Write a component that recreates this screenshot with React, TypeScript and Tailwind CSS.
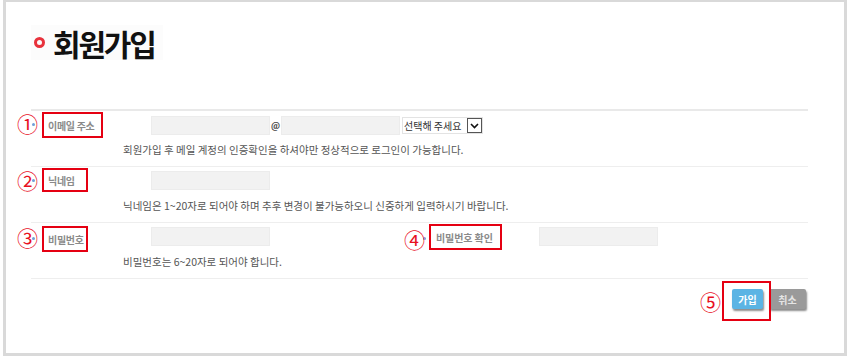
const font = { fontFamily: '"Noto Sans CJK KR", "Noto Sans", sans-serif' };

function Circled({ n, className }: { n: string; className: string }) {
  return (
    <span className={`absolute text-[21px] leading-none text-[#e8101f] ${className}`}>{n}</span>
  );
}

function Dot({ className }: { className: string }) {
  return <span className={`absolute w-[3px] h-[3px] rounded-full bg-[#6f9fd8] ${className}`} />;
}

function Input({ className = "" }: { className?: string }) {
  return <div className={`w-[119px] h-[19px] bg-[#f2f2f2] border border-[#ececec] ${className}`} />;
}

export default function App() {
  return (
    <div className="w-[847px] h-[357px] bg-white overflow-hidden" style={font}>
      <div className="ml-[3px] w-[844px] h-[356px] border-[3px] border-t-2 border-[#d9d9d9]">
        {/* title */}
        <div className="ml-[25px] mt-[23px] w-[132px] h-[35px] bg-[#fcfcfc] flex items-center">
          <span className="ml-[3px] w-[11px] h-[11px] rounded-full border-[3px] border-[#e8323c]" />
          <h1 className="ml-[8px] text-[30px] leading-none font-bold tracking-[-2.2px] text-[#111]">회원가입</h1>
        </div>

        <div className="ml-[25px] mt-[49px] w-[777px] border-t-2 border-[#e9e9e9]">
          {/* row 1 */}
          <div className="relative h-[56px] border-b border-[#eeeeee] flex items-start">
            <Dot className="left-[1px] top-[12px]" />
            <Circled n="①" className="left-[-14px] top-[2px]" />
            <div className="w-[92px] pl-[11px] pt-[1px]">
              <span className="flex w-[61px] h-[26px] items-center pl-[4px] border-2 border-[#e50012] text-[10px] font-bold tracking-[-0.3px] text-[#8a8a8a] whitespace-pre">
                이메일 주소
              </span>
            </div>
            <div className="pt-[5px]">
              <div className="flex items-center h-[19px]">
                <Input className="ml-[28px]" />
                <span className="w-[11px] text-center text-[9px] font-bold text-[#444]">@</span>
                <Input />
                <div className="ml-[2px] flex items-center h-[17px] w-[81px] border border-[#e3e3e3] bg-white">
                  <span className="ml-[1px] text-[10px] tracking-[0px] text-[#333] whitespace-pre">선택해 주세요</span>
                  <span className="ml-auto w-[15px] h-[15px] border border-[#555] flex items-center justify-center">
                    <svg width="9" height="6" viewBox="0 0 9 6">
                      <path d="M1 1 L4.5 4.5 L8 1" fill="none" stroke="#111" strokeWidth="1.6" />
                    </svg>
                  </span>
                </div>
              </div>
              <p className="mt-[8px] text-[10.5px] leading-[14px] tracking-[0px] text-[#555] whitespace-pre">
                회원가입 후 메일 계정의 인증확인을 하셔야만 정상적으로 로그인이 가능합니다.
              </p>
            </div>
          </div>

          {/* row 2 */}
          <div className="relative h-[56px] border-b border-[#eeeeee] flex items-start">
            <Dot className="left-[1px] top-[12px]" />
            <Circled n="②" className="left-[-14px] top-[3px]" />
            <div className="w-[92px] pl-[11px] pt-[1px]">
              <span className="flex w-[46px] h-[24px] items-center pl-[4px] border-2 border-[#e50012] text-[10px] font-bold tracking-[-0.3px] text-[#8a8a8a] whitespace-pre">
                닉네임
              </span>
            </div>
            <div className="pt-[4px]">
              <Input className="ml-[28px]" />
              <p className="mt-[9px] text-[10.5px] leading-[14px] tracking-[0px] text-[#555] whitespace-pre">
                닉네임은 1~20자로 되어야 하며 추후 변경이 불가능하오니 신중하게 입력하시기 바랍니다.
              </p>
            </div>
          </div>

          {/* row 3 */}
          <div className="relative h-[56px] border-b border-[#eeeeee] flex items-start">
            <Dot className="left-[1px] top-[14px]" />
            <Circled n="③" className="left-[-14px] top-[4px]" />
            <div className="w-[92px] pl-[11px] pt-[3px]">
              <span className="flex w-[46px] h-[26px] items-center pl-[4px] border-2 border-[#e50012] text-[10px] font-bold tracking-[-0.3px] text-[#8a8a8a] whitespace-pre">
                비밀번호
              </span>
            </div>
            <div className="pt-[4px]">
              <Input className="ml-[28px]" />
              <p className="mt-[9px] text-[10.5px] leading-[14px] tracking-[0px] text-[#555] whitespace-pre">
                비밀번호는 6~20자로 되어야 합니다.
              </p>
            </div>
            <div className="absolute left-[398px] top-[1px] flex items-start">
              <Dot className="left-[-6px] top-[13px]" />
              <Circled n="④" className="left-[-25px] top-[5px]" />
              <span className="flex w-[73px] h-[26px] items-center pl-[5px] border-2 border-[#e50012] text-[10px] font-bold tracking-[-0.1px] text-[#8a8a8a] whitespace-pre">
                비밀번호 확인
              </span>
              <Input className="ml-[37px] mt-[3px]" />
            </div>
          </div>

          {/* buttons */}
          <div className="relative flex justify-end gap-[6px] pt-[10px] pr-[2px]">
            <Circled n="⑤" className="left-[669px] top-[12px]" />
            <span className="absolute left-[691px] top-[2px] w-[49px] h-[40px] border-2 border-[#e50012]" />
            <button className="w-[31px] h-[20px] rounded-[2px] bg-[#5bb4e4] text-white text-[10px] font-bold shadow-[1px_2px_2px_rgba(0,0,0,0.45)]">
              가입
            </button>
            <button className="w-[37px] h-[20px] rounded-[2px] bg-[#9a9a9a] text-[#e5e5e5] text-[10px] font-bold shadow-[1px_2px_2px_rgba(0,0,0,0.45)]">
              취소
            </button>
          </div>
        </div>
      </div>
    </div>
  );
}
